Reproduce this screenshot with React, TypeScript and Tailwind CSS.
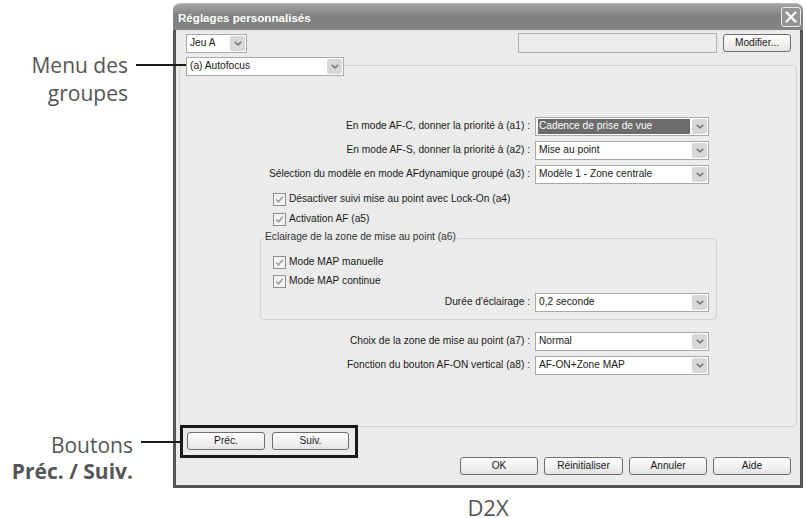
import React from "react";

const ui = { fontFamily: '"Liberation Sans", Arial, sans-serif' };
const callout = { fontFamily: '"Open Sans", "Noto Sans", sans-serif' };

function Chevron() {
  return (
    <svg width="8" height="5" viewBox="0 0 8 5">
      <path d="M0.8 0.8 L4 3.8 L7.2 0.8" fill="none" stroke="#7a7a7a" strokeWidth="1.6" />
    </svg>
  );
}

function Select({ value, w, highlight }: { value: string; w: string; highlight?: boolean }) {
  return (
    <div className={`${w} h-[19px] shrink-0 border border-[#a9a9a9] bg-white flex items-center`}>
      {highlight ? (
        <div className="flex-1 ml-[2px] mr-[2px] h-[15px] bg-[#6c6c6c] text-white flex items-center px-[1px] leading-none">
          {value}
        </div>
      ) : (
        <div className="flex-1 px-[3px] leading-none text-[#1a1a1a] whitespace-nowrap overflow-hidden">{value}</div>
      )}
      <div className="w-[15px] h-[15px] mr-[1px] bg-[#d8d8d8] rounded-[2px] flex items-center justify-center">
        <Chevron />
      </div>
    </div>
  );
}

function Check({ label }: { label: string }) {
  return (
    <div className="flex items-center h-[16px] gap-[3px]">
      <div className="w-[13px] h-[13px] border border-[#8e8e8e] bg-[#f3f3f3] flex items-center justify-center">
        <svg width="9" height="9" viewBox="0 0 9 9">
          <path d="M1.2 4.5 L3.5 6.8 L7.8 1.8" fill="none" stroke="#9a9a9a" strokeWidth="1.6" />
        </svg>
      </div>
      <span className="leading-none text-[#1a1a1a]">{label}</span>
    </div>
  );
}

function Button({ label, w }: { label: string; w: string }) {
  return (
    <div
      className={`${w} h-[18px] shrink-0 border border-[#6e6e6e] rounded-[3px] bg-gradient-to-b from-white to-[#e4e4e4] flex items-center justify-center leading-none text-[#1a1a1a]`}
    >
      {label}
    </div>
  );
}

function Row({ label, value, labelW, highlight, mt }: { label: string; value: string; labelW: string; highlight?: boolean; mt: string }) {
  return (
    <div className={`flex items-center ${mt}`}>
      <div className={`${labelW} text-right leading-none text-[#1a1a1a] whitespace-nowrap`}>{label}</div>
      <div className="w-[5px]" />
      <Select value={value} w="w-[174px]" highlight={highlight} />
    </div>
  );
}

export default function App() {
  return (
    <div className="relative w-[806px] h-[518px] bg-white overflow-hidden">
      <div className="flex">
        {/* callout column */}
        <div className="w-[173px] shrink-0 flex flex-col text-[#555555] text-[21px]" style={callout}>
          <div className="pt-[51px] pr-[45px] text-right leading-[28px]">
            <div>Menu des</div>
            <div>groupes</div>
          </div>
          <div className="mt-[325px] pr-[40px] text-right leading-[26px]">
            <div>Boutons</div>
            <div className="font-bold">Préc. / Suiv.</div>
          </div>
        </div>

        <div className="w-[630px] shrink-0 flex flex-col items-center">
          {/* window */}
          <div className="w-[630px] mt-[3px] h-[485px] flex flex-col text-[10.2px]" style={ui}>
            <div className="h-[27px] rounded-t-[7px] bg-gradient-to-b from-[#a4a4a4] via-[#7f7f7f] to-[#858585] border-t border-[#b8b8b8] flex items-center pl-[5px] pr-[2px]">
              <span className="text-white font-bold text-[11.6px] flex-1 pt-[1px]">Réglages personnalisés</span>
              <div className="w-[20px] h-[20px] rounded-[3px] border border-[#e8e8e8] bg-[#959595] flex items-center justify-center">
                <svg width="12" height="12" viewBox="0 0 12 12">
                  <path d="M1.5 1.5 L10.5 10.5 M10.5 1.5 L1.5 10.5" stroke="white" strokeWidth="2.2" strokeLinecap="round" />
                </svg>
              </div>
            </div>

            <div className="relative flex-1 flex flex-col border-[3px] border-t-0 border-[#555555] bg-[#ebebeb]">
              {/* top row */}
              <div className="flex items-center pt-[3px] pr-[9px]">
                <div className="ml-[10px]">
                  <Select value="Jeu A" w="w-[61px]" />
                </div>
                <div className="flex-1" />
                <div className="w-[199px] h-[20px] border border-[#b0b0b0] bg-[#ececec]" />
                <div className="w-[6px]" />
                <Button label="Modifier..." w="w-[68px]" />
              </div>

              {/* group panel */}
              <div className="relative mt-[12px] mx-[3px] h-[362px] border border-[#d2d2d2] rounded-[4px]">
                <div className="absolute left-[6px] -top-[9px] bg-[#ebebeb]">
                  <Select value="(a) Autofocus" w="w-[158px]" />
                </div>

                <div className="pt-[51px] flex flex-col">
                  <Row label="En mode AF-C, donner la priorité à (a1) :" value="Cadence de prise de vue" labelW="w-[350px]" highlight mt="mt-0" />
                  <Row label="En mode AF-S, donner la priorité à (a2) :" value="Mise au point" labelW="w-[350px]" mt="mt-[5px]" />
                  <Row label="Sélection du modèle en mode AFdynamique groupé (a3) :" value="Modèle 1 - Zone centrale" labelW="w-[350px]" mt="mt-[5px]" />

                  <div className="pl-[93px] mt-[7px] flex flex-col gap-[4px]">
                    <Check label="Désactiver suivi mise au point avec Lock-On (a4)" />
                    <Check label="Activation AF (a5)" />
                  </div>

                  {/* lighting sub-group */}
                  <div className="relative ml-[80px] mt-[11px] w-[457px] h-[82px] border border-[#d2d2d2] rounded-[4px]">
                    <div className="absolute left-[3px] -top-[7px] px-[1px] bg-[#ebebeb] leading-none text-[#333333]">
                      Eclairage de la zone de mise au point (a6)
                    </div>
                    <div className="pl-[12px] pt-[15px] flex flex-col gap-[3px]">
                      <Check label="Mode MAP manuelle" />
                      <Check label="Mode MAP continue" />
                    </div>
                    <div className="flex items-center mt-[4px]">
                      <div className="w-[269px] text-right leading-none text-[#1a1a1a]">Durée d'éclairage :</div>
                      <div className="w-[5px]" />
                      <Select value="0,2 seconde" w="w-[174px]" />
                    </div>
                  </div>

                  <Row label="Choix de la zone de mise au point (a7) :" value="Normal" labelW="w-[350px]" mt="mt-[12px]" />
                  <Row label="Fonction du bouton AF-ON vertical (a8) :" value="AF-ON+Zone MAP" labelW="w-[350px]" mt="mt-[5px]" />
                </div>
              </div>

              {/* previous / next */}
              <div className="flex mt-[5px] ml-[11px] gap-[7px]">
                <Button label="Préc." w="w-[78px]" />
                <Button label="Suiv." w="w-[77px]" />
              </div>

              {/* dialog buttons */}
              <div className="flex justify-end mt-[7px] mr-[9px] gap-[6px]">
                <Button label="OK" w="w-[78px]" />
                <Button label="Réinitialiser" w="w-[79px]" />
                <Button label="Annuler" w="w-[78px]" />
                <Button label="Aide" w="w-[78px]" />
              </div>

              {/* callout frame */}
              <div className="absolute left-[4px] top-[395px] w-[178px] h-[33px] border-[3px] border-[#1a1a1a]" />
            </div>
          </div>

          <div className="mt-[9px] text-[22px] leading-[20px] text-[#555555]" style={callout}>D2X</div>
        </div>
      </div>

      {/* callout leader lines */}
      <div className="absolute left-[136px] top-[64px] w-[50px] h-[2px] bg-[#1a1a1a]" />
      <div className="absolute left-[141px] top-[441px] w-[40px] h-[2px] bg-[#1a1a1a]" />
    </div>
  );
}
